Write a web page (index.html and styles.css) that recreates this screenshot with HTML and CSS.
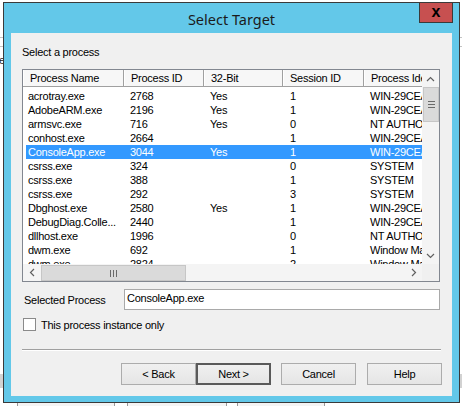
FILE: index.html
```html
<!DOCTYPE html>
<html>
<head>
<meta charset="utf-8">
<link rel="stylesheet" href="styles.css">
</head>
<body>
<div class="backwin">
  <div class="bw-space s37"></div>
  <div class="bw-rule"></div>
  <div class="bw-space s8"></div>
  <div class="bw-rule"></div>
  <div class="bw-text">Type</div>
  <div class="bw-space s300"></div>
  <div class="bw-band"></div>
  <div class="bw-space s11"></div>
  <div class="bw-buttons">
    <div class="bw-btn b1">Add Rule</div>
    <div class="bw-btn b2 dis">Edit Rule</div>
    <div class="bw-btn b3 dis">Remove Rule</div>
  </div>
</div>

<div class="dialog">
  <div class="titlebar">
    <div class="title">Select Target</div>
    <div class="close">x</div>
  </div>
  <div class="client">
    <div class="lbl">Select a process</div>
    <div class="list">
      <div class="viewport">
        <div class="header">
          <div class="hc c1">Process Name</div>
          <div class="hc c2">Process ID</div>
          <div class="hc c3">32-Bit</div>
          <div class="hc c4">Session ID</div>
          <div class="hc c5">Process Identity</div>
        </div>
        <div class="rows">
          <div class="row"><span class="d1">acrotray.exe</span><span class="d2">2768</span><span class="d3">Yes</span><span class="d4">1</span><span class="d5">WIN-29CEA1B\Admin</span></div>
          <div class="row"><span class="d1">AdobeARM.exe</span><span class="d2">2196</span><span class="d3">Yes</span><span class="d4">1</span><span class="d5">WIN-29CEA1B\Admin</span></div>
          <div class="row"><span class="d1">armsvc.exe</span><span class="d2">716</span><span class="d3">Yes</span><span class="d4">0</span><span class="d5">NT AUTHORITY\SYSTEM</span></div>
          <div class="row"><span class="d1">conhost.exe</span><span class="d2">2664</span><span class="d3"></span><span class="d4">1</span><span class="d5">WIN-29CEA1B\Admin</span></div>
          <div class="row sel"><span class="d1">ConsoleApp.exe</span><span class="d2">3044</span><span class="d3">Yes</span><span class="d4">1</span><span class="d5">WIN-29CEA1B\Admin</span></div>
          <div class="row"><span class="d1">csrss.exe</span><span class="d2">324</span><span class="d3"></span><span class="d4">0</span><span class="d5">SYSTEM</span></div>
          <div class="row"><span class="d1">csrss.exe</span><span class="d2">388</span><span class="d3"></span><span class="d4">1</span><span class="d5">SYSTEM</span></div>
          <div class="row"><span class="d1">csrss.exe</span><span class="d2">292</span><span class="d3"></span><span class="d4">3</span><span class="d5">SYSTEM</span></div>
          <div class="row"><span class="d1">Dbghost.exe</span><span class="d2">2580</span><span class="d3">Yes</span><span class="d4">1</span><span class="d5">WIN-29CEA1B\Admin</span></div>
          <div class="row"><span class="d1">DebugDiag.Colle...</span><span class="d2">2440</span><span class="d3"></span><span class="d4">1</span><span class="d5">WIN-29CEA1B\Admin</span></div>
          <div class="row"><span class="d1">dllhost.exe</span><span class="d2">1996</span><span class="d3"></span><span class="d4">0</span><span class="d5">NT AUTHORITY\SYSTEM</span></div>
          <div class="row"><span class="d1">dwm.exe</span><span class="d2">692</span><span class="d3"></span><span class="d4">1</span><span class="d5">Window Manager\DWM-1</span></div>
          <div class="row"><span class="d1">dwm.exe</span><span class="d2">2824</span><span class="d3"></span><span class="d4">2</span><span class="d5">Window Manager\DWM-2</span></div>
        </div>
      </div>
      <div class="vscroll">
        <div class="sbtn"><svg width="9" height="6" viewBox="0 0 9 6"><path d="M1 5 L4.5 1.5 L8 5" fill="none" stroke="#606060" stroke-width="1.2"/></svg></div>
        <div class="vthumb"><span class="gl"></span><span class="gl"></span><span class="gl"></span></div>
        <div class="vtrack"></div>
        <div class="sbtn"><svg width="9" height="6" viewBox="0 0 9 6"><path d="M1 1 L4.5 4.5 L8 1" fill="none" stroke="#606060" stroke-width="1.2"/></svg></div>
      </div>
      <div class="hscroll">
        <div class="sbtn"><svg width="6" height="9" viewBox="0 0 6 9"><path d="M5 1 L1.5 4.5 L5 8" fill="none" stroke="#606060" stroke-width="1.2"/></svg></div>
        <div class="hthumb"><span class="gv"></span><span class="gv"></span><span class="gv"></span></div>
        <div class="htrack"></div>
        <div class="sbtn"><svg width="6" height="9" viewBox="0 0 6 9"><path d="M1 1 L4.5 4.5 L1 8" fill="none" stroke="#606060" stroke-width="1.2"/></svg></div>
      </div>
      <div class="corner"></div>
    </div>
    <div class="selrow">
      <div class="sel-lbl">Selected Process</div>
      <div class="textbox">ConsoleApp.exe</div>
    </div>
    <div class="checkrow">
      <span class="check"></span>
      <span class="check-lbl">This process instance only</span>
    </div>
    <div class="sep"></div>
    <div class="buttons">
      <div class="btn back">&lt; Back</div>
      <div class="btn next">Next &gt;</div>
      <div class="btn cancel">Cancel</div>
      <div class="btn help">Help</div>
    </div>
  </div>
</div>
</body>
</html>
```
FILE: styles.css
```css
html, body {
  margin: 0;
  padding: 0;
}
body {
  width: 462px;
  height: 406px;
  overflow: hidden;
  position: relative;
  font-family: "Liberation Sans", Arial, sans-serif;
  font-size: 11px;
  letter-spacing: -0.25px;
  color: #000;
  background: #fff;
}

/* background window */
.backwin {
  position: absolute;
  left: 0;
  top: 0;
  width: 462px;
  height: 406px;
  background: #fff;
}
.bw-space.s37 { height: 37px; }
.bw-space.s8 { height: 8px; }
.bw-space.s300 { height: 307px; }
.bw-space.s11 { height: 11px; }
.bw-rule { height: 1px; background: #c4c4c4; }
.bw-text {
  height: 13px;
  line-height: 13px;
  margin-left: -18px;
  margin-top: 7px;
  color: #222;
}
.bw-band { height: 14px; background: #d2d2d2; }
.bw-buttons {
  display: flex;
  padding-left: 17px;
}
.bw-btn {
  box-sizing: border-box;
  height: 26px;
  border: 1px solid #9a9a9a;
  background: #f4f4f4;
  text-align: center;
  line-height: 13px;
  padding-top: 6px;
  color: #1c1c50;
}
.bw-btn.b1 { width: 98px; }
.bw-btn.b2 { width: 100px; margin-left: 12px; }
.bw-btn.b3 { width: 88px; margin-left: 10px; }
.bw-btn.dis { color: #9a9a9a; }

/* dialog */
.dialog {
  position: absolute;
  left: 3px;
  top: 2px;
  width: 457px;
  height: 401px;
  box-sizing: border-box;
  border: 1px solid #3a3a3a;
  background: #63c8e9;
  display: flex;
  flex-direction: column;
  padding: 0 7px 6px 7px;
}
.titlebar {
  height: 30px;
  margin: 0 -7px;
  position: relative;
  display: flex;
  align-items: center;
  justify-content: center;
}
.title {
  font-family: "Noto Sans", "Open Sans", sans-serif;
  font-size: 14.5px;
  letter-spacing: 0;
  color: #1b1b1b;
  margin-top: 1px;
}
.close {
  position: absolute;
  top: -1px;
  right: 6px;
  width: 34px;
  height: 21px;
  box-sizing: border-box;
  border: 1px solid #3a3a3a;
  background: #c75050;
  color: #000;
  font-family: "Liberation Sans", Arial, sans-serif;
  font-weight: bold;
  font-size: 16px;
  line-height: 17px;
  text-align: center;
  letter-spacing: 0;
}
.client {
  flex: 1;
  background: #f0f0f0;
  padding: 13px 0 0 11px;
  box-sizing: border-box;
}
.lbl {
  height: 13px;
  line-height: 13px;
}

/* list view */
.list {
  margin-top: 10px;
  width: 418px;
  height: 213px;
  box-sizing: border-box;
  border: 1px solid #828790;
  background: #fff;
  display: grid;
  grid-template-columns: 399px 17px;
  grid-template-rows: 194px 17px;
}
.viewport {
  overflow: hidden;
  position: relative;
}
.header {
  display: flex;
  height: 17px;
  box-sizing: border-box;
  border-bottom: 1px solid #a0a0a0;
  background: #f7f7f7;
  white-space: nowrap;
}
.hc {
  flex: none;
  box-sizing: border-box;
  height: 16px;
  line-height: 16px;
  padding-left: 7px;
  border-right: 1px solid #a0a0a0;
  box-shadow: inset 1px 0 0 #fff;
  overflow: hidden;
}
.hc.c1 { width: 101px; }
.hc.c2 { width: 80px; }
.hc.c3 { width: 79px; }
.hc.c4 { width: 81px; }
.hc.c5 { width: 120px; }
.rows {
  padding-top: 2px;
}
.row {
  display: flex;
  height: 14px;
  line-height: 14px;
  margin-left: 3px;
  white-space: nowrap;
}
.row span {
  flex: none;
  box-sizing: border-box;
  overflow: hidden;
}
.row .d1 { width: 98px; padding-left: 2px; }
.row .d2 { width: 80px; padding-left: 6px; }
.row .d3 { width: 79px; padding-left: 6px; }
.row .d4 { width: 81px; padding-left: 7px; }
.row .d5 { width: 200px; padding-left: 6px; }
.row.sel {
  background: #3399ff;
  color: #fff;
}

/* scrollbars */
.vscroll {
  display: flex;
  flex-direction: column;
  background: #f4f4f4;
}
.sbtn {
  flex: none;
  width: 17px;
  height: 17px;
  display: flex;
  align-items: center;
  justify-content: center;
}
.vthumb {
  flex: none;
  height: 35px;
  margin: 0 0 0 1px;
  box-sizing: border-box;
  border: 1px solid #c6c6c6;
  background: #dadada;
  display: flex;
  flex-direction: column;
  align-items: center;
  justify-content: center;
  gap: 2px;
}
.gl {
  display: block;
  width: 7px;
  height: 1px;
  background: #6a6a6a;
}
.vtrack { flex: 1; }
.hscroll {
  display: flex;
  background: #f4f4f4;
}
.hthumb {
  flex: none;
  width: 145px;
  margin-top: 1px;
  margin-left: 1px;
  box-sizing: border-box;
  border: 1px solid #c6c6c6;
  background: #dadada;
  display: flex;
  align-items: center;
  justify-content: center;
  gap: 2px;
}
.gv {
  display: block;
  width: 1px;
  height: 7px;
  background: #6a6a6a;
}
.htrack { flex: 1; }
.corner { background: #f0f0f0; }

/* selected process row */
.selrow {
  margin-top: 7px;
  display: flex;
  align-items: center;
}
.sel-lbl {
  width: 100px;
  margin-left: 2px;
  line-height: 13px;
  margin-top: 1px;
}
.textbox {
  width: 316px;
  height: 21px;
  box-sizing: border-box;
  border: 1px solid #a9a9a9;
  background: #fff;
  padding: 1px 0 0 2px;
  line-height: 14px;
}
.checkrow {
  margin-top: 8px;
  display: flex;
  align-items: center;
  margin-left: 1px;
  height: 13px;
}
.check {
  width: 13px;
  height: 13px;
  box-sizing: border-box;
  border: 1px solid #8a8a8a;
  background: #fff;
}
.check-lbl {
  margin-left: 5px;
  line-height: 13px;
  margin-top: 1px;
}
.sep {
  margin-top: 18px;
  width: 419px;
  height: 1px;
  background: #a0a0a0;
  border-bottom: 1px solid #fff;
}
.buttons {
  margin-top: 12px;
  display: flex;
  padding-left: 99px;
}
.btn {
  flex: none;
  width: 75px;
  height: 22px;
  box-sizing: border-box;
  border: 1px solid #acacac;
  background: linear-gradient(#f0f0f0, #e5e5e5);
  text-align: center;
  line-height: 20px;
}
.btn.next {
  border: 2px solid #5a5a5a;
  line-height: 18px;
}
.btn.cancel { margin-left: 10px; }
.btn.help { margin-left: 11px; }
```
